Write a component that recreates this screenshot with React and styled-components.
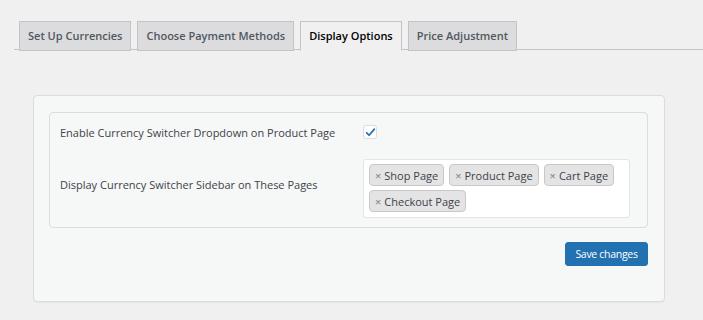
import React from "react";
import styled, { createGlobalStyle } from "styled-components";

const Global = createGlobalStyle`
  html, body { margin: 0; padding: 0; background: #f0f0f1; }
  body { font-family: "Open Sans", "Noto Sans", sans-serif; font-size: 11px; color: #3c434a; }
`;

const Page = styled.div`
  padding-top: 21px;
  height: 320px;
  box-sizing: border-box;
  overflow: hidden;
`;

const TabBar = styled.nav`
  display: flex;
  gap: 6px;
  margin-left: 14px;
  padding-left: 5px;
  border-bottom: 1px solid #c3c4c7;
  height: 29px;
  box-sizing: border-box;
`;

const Tab = styled.div`
  box-sizing: border-box;
  height: 30px;
  padding: 0 8px 1px;
  display: flex;
  align-items: center;
  border: 1px solid #c3c4c7;
  border-bottom-color: ${(p) => (p.$active ? "#f0f0f1" : "#c3c4c7")};
  background: ${(p) => (p.$active ? "#f0f0f1" : "#dcdcde")};
  color: ${(p) => (p.$active ? "#000" : "#50575e")};
  font-weight: 600;
  font-size: 11px;
  white-space: nowrap;
`;

const Card = styled.div`
  margin: 45px 38px 0 33px;
  background: #f6f7f7;
  border: 1px solid #dcdcde;
  border-radius: 4px;
  padding: 16px 16px 35px 15px;
  box-shadow: 0 1px 1px rgba(0,0,0,0.04);
`;

const Fieldset = styled.div`
  border: 1px solid #dcdcde;
  border-radius: 4px;
  padding: 0 17px 9px 10px;
  display: grid;
  grid-template-columns: 303px 1fr;
  align-items: center;
`;

const Label = styled.div`
  color: #3c434a;
  font-size: 11px;
`;

const Cell = styled.div`
  display: flex;
  align-items: center;
  min-height: ${(p) => p.$h || "auto"};
`;

const Check = styled.span`
  width: 14px;
  height: 14px;
  box-sizing: border-box;
  border: 1px solid #dcdcde;
  border-radius: 3px;
  background: #fff;
  display: flex;
  align-items: center;
  justify-content: center;
`;

const Select = styled.div`
  width: 267px;
  box-sizing: border-box;
  margin: 8px 0 0 0;
  background: #fff;
  border: 1px solid #e4e4e4;
  border-radius: 3px;
  padding: 4px 5px 5px 5px;
  display: flex;
  flex-wrap: wrap;
  gap: 4px 5px;
`;

const Chip = styled.span`
  height: 22px;
  box-sizing: border-box;
  display: inline-flex;
  align-items: center;
  gap: 3px;
  padding: 0 5px 0 5px;
  background: #e4e4e4;
  border: 1px solid #c8c8c8;
  border-radius: 4px;
  color: #3c434a;
  font-size: 11px;
`;

const X = styled.span`
  color: #8c8f94;
  font-size: 11px;
  font-weight: 600;
`;

const Footer = styled.div`
  display: flex;
  justify-content: flex-end;
  margin-top: 14px;
`;

const Button = styled.button`
  height: 24px;
  width: 83px;
  padding: 0;
  background: #2271b1;
  border: 1px solid #2271b1;
  border-radius: 3px;
  color: #fff;
  font-family: "Open Sans", sans-serif;
  font-size: 10.5px;
  letter-spacing: -0.3px;
`;

const tags = ["Shop Page", "Product Page", "Cart Page", "Checkout Page"];

export default function App() {
  return (
    <Page>
      <Global />
      <TabBar>
        <Tab>Set Up Currencies</Tab>
        <Tab>Choose Payment Methods</Tab>
        <Tab $active>Display Options</Tab>
        <Tab>Price Adjustment</Tab>
      </TabBar>
      <Card>
        <Fieldset>
          <Label>Enable Currency Switcher Dropdown on Product Page</Label>
          <Cell $h="38px">
            <Check>
              <svg width="11" height="11" viewBox="0 0 20 20">
                <path d="M3 10.5l4.5 4.5L17 4" fill="none" stroke="#2271b1" strokeWidth="3.2" strokeLinecap="round" strokeLinejoin="round" />
              </svg>
            </Check>
          </Cell>
          <Label>Display Currency Switcher Sidebar on These Pages</Label>
          <Cell>
            <Select>
              {tags.map((t) => (
                <Chip key={t}>
                  <X>×</X>
                  {t}
                </Chip>
              ))}
            </Select>
          </Cell>
        </Fieldset>
        <Footer>
          <Button>Save changes</Button>
        </Footer>
      </Card>
    </Page>
  );
}
